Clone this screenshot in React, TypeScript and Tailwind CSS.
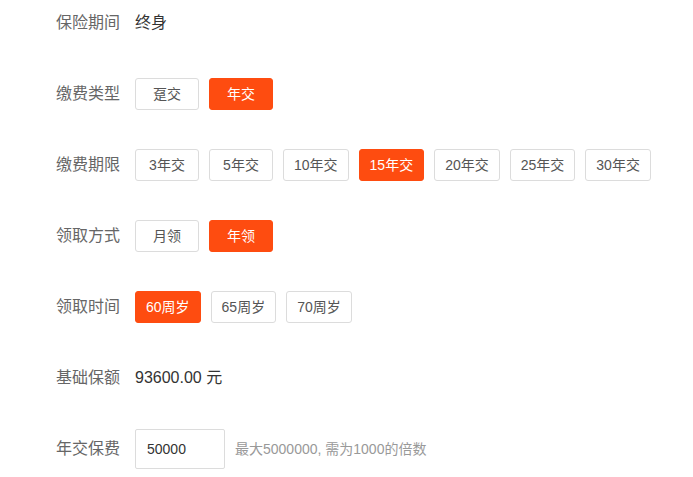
const font = { fontFamily: '"Liberation Sans", "Noto Sans CJK SC", sans-serif' };

type Row =
  | { label: string; kind: "text"; value: string }
  | { label: string; kind: "options"; options: string[]; active: number }
  | { label: string; kind: "input"; value: string; hint: string };

const rows: Row[] = [
  { label: "保险期间", kind: "text", value: "终身" },
  { label: "缴费类型", kind: "options", options: ["趸交", "年交"], active: 1 },
  {
    label: "缴费期限",
    kind: "options",
    options: ["3年交", "5年交", "10年交", "15年交", "20年交", "25年交", "30年交"],
    active: 3,
  },
  { label: "领取方式", kind: "options", options: ["月领", "年领"], active: 1 },
  { label: "领取时间", kind: "options", options: ["60周岁", "65周岁", "70周岁"], active: 0 },
  { label: "基础保额", kind: "text", value: "93600.00 元" },
  { label: "年交保费", kind: "input", value: "50000", hint: "最大5000000, 需为1000的倍数" },
];

function OptionButton({ text, active }: { text: string; active: boolean }) {
  return (
    <button
      type="button"
      className={
        active
          ? "h-8 min-w-[64px] rounded-[3px] border border-[#fe4c10] bg-[#fe4c10] px-[10px] text-[14px] text-white"
          : "h-8 min-w-[64px] rounded-[3px] border border-[#dcdcdc] bg-white px-[10px] text-[14px] text-[#555]"
      }
    >
      {text}
    </button>
  );
}

export default function App() {
  return (
    <div className="min-h-[477px] bg-white pl-[56px] pt-[7px]" style={font}>
      <div className="flex flex-col gap-[39px]">
        {rows.map((row) => (
          <div
            key={row.label}
            className={row.kind === "input" ? "-mt-1 flex h-10 items-center" : "flex h-8 items-center"}
          >
            <span className="w-[79px] shrink-0 text-[16px] text-[#666]">{row.label}</span>

            {row.kind === "text" && <span className="text-[16px] text-[#333]">{row.value}</span>}

            {row.kind === "options" && (
              <div className="flex gap-[10px]">
                {row.options.map((opt, i) => (
                  <OptionButton key={opt} text={opt} active={i === row.active} />
                ))}
              </div>
            )}

            {row.kind === "input" && (
              <div className="flex items-center gap-[10px]">
                <input
                  type="text"
                  defaultValue={row.value}
                  className="h-10 w-[90px] rounded-[2px] border border-[#dcdcdc] px-[11px] text-[14px] text-[#333] outline-none"
                />
                <span className="text-[14px] text-[#999]">{row.hint}</span>
              </div>
            )}
          </div>
        ))}
      </div>
    </div>
  );
}
